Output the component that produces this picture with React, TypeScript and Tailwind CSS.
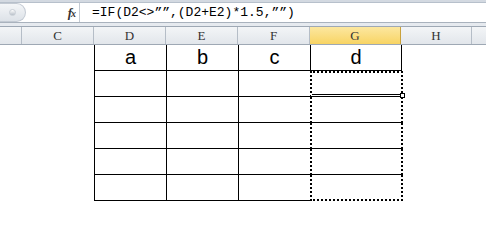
import React from "react";

const cols = [
  { name: "C", w: "w-[72px]" },
  { name: "D", w: "w-[72px]" },
  { name: "E", w: "w-[72px]" },
  { name: "F", w: "w-[72px]" },
  { name: "G", w: "w-[91px]", active: true },
  { name: "H", w: "w-[71px]" },
];

const heads = ["a", "b", "c", "d"];

function FormulaBar() {
  return (
    <div className="flex h-[20px] bg-white border-b border-[#a9b2bd]">
      <div className="w-[26px] h-full rounded-r-full border border-l-0 border-[#c3cad3] bg-gradient-to-b from-[#f4f6f8] to-[#dde2e8] flex items-center justify-center">
        <div className="w-[7px] h-[7px] rounded-full bg-gradient-to-b from-[#ffffff] to-[#b9c0c9] border border-[#c9cfd6]" />
      </div>
      <div className="w-[54px] flex items-center justify-end pr-[4px] border-r border-[#c3cad3]">
        <span className="font-['Liberation_Serif',serif] italic font-bold text-[13px] text-[#333] tracking-[-1px]">
          f<span className="text-[10px]">x</span>
        </span>
      </div>
      <div className="flex items-center pl-[12px] font-['Liberation_Mono',monospace] text-[13px] text-black whitespace-nowrap">
        =IF(D2&lt;&gt;””,(D2+E2)*1.5,””)
      </div>
    </div>
  );
}

function ColumnHeaders() {
  return (
    <div className="flex h-[19px] border-t border-b border-[#9ea8b4] bg-gradient-to-b from-[#f3f5f7] to-[#e2e6eb]">
      <div className="w-[22px] border-r border-[#b5bdc7]" />
      {cols.map((c) => (
        <div
          key={c.name}
          className={
            c.active
              ? `${c.w} flex items-center justify-center border-r border-[#c9a13c] bg-gradient-to-b from-[#fce79f] to-[#f8d462] text-[#333] font-['Liberation_Serif',serif] text-[13px]`
              : `${c.w} flex items-center justify-center border-r border-[#b5bdc7] text-[#333] font-['Liberation_Serif',serif] text-[13px]`
          }
        >
          {c.name}
        </div>
      ))}
      <div className="flex-1" />
    </div>
  );
}

function Table() {
  const rows = [0, 1, 2, 3, 4];
  return (
    <div className="pl-[94px]">
      <div className="w-[308px] border-l border-black">
        <div className="flex h-[26px]">
          {heads.map((h, i) => (
            <div
              key={h}
              className={`${i === 3 ? "w-[91px]" : "w-[72px]"} border-r border-b border-black flex items-center justify-center font-['Liberation_Sans',Arial,sans-serif] text-[20px] text-black pb-[1px]`}
            >
              {h}
            </div>
          ))}
        </div>
        {rows.map((r) => {
          let g = "border-x-2 border-dotted border-black";
          if (r === 0) g += " border-t-2 border-b-[3px] [border-bottom-style:double]";
          else if (r === 4) g += " border-b-2";
          else g += " border-b [border-bottom-style:solid]";
          return (
            <div key={r} className="flex h-[26px]">
              <div className="w-[72px] border-r border-b border-black" />
              <div className="w-[72px] border-r border-b border-black" />
              <div className="w-[71px] border-b border-black" />
              <div className={`relative w-[93px] -mr-[1px] ${g}`}>
                {r === 0 && (
                  <div className="absolute right-[-4px] bottom-[-4px] w-[5px] h-[5px] border border-black bg-white" />
                )}
              </div>
            </div>
          );
        })}
      </div>
    </div>
  );
}

export default function App() {
  return (
    <div className="w-[486px] h-[247px] overflow-hidden bg-white">
      <div className="h-[3px] bg-[#d3d9e1] border-b border-[#b7c0cb]" />
      <FormulaBar />
      <div className="h-[3px] bg-[#e6eaef]" />
      <ColumnHeaders />
      <Table />
    </div>
  );
}
